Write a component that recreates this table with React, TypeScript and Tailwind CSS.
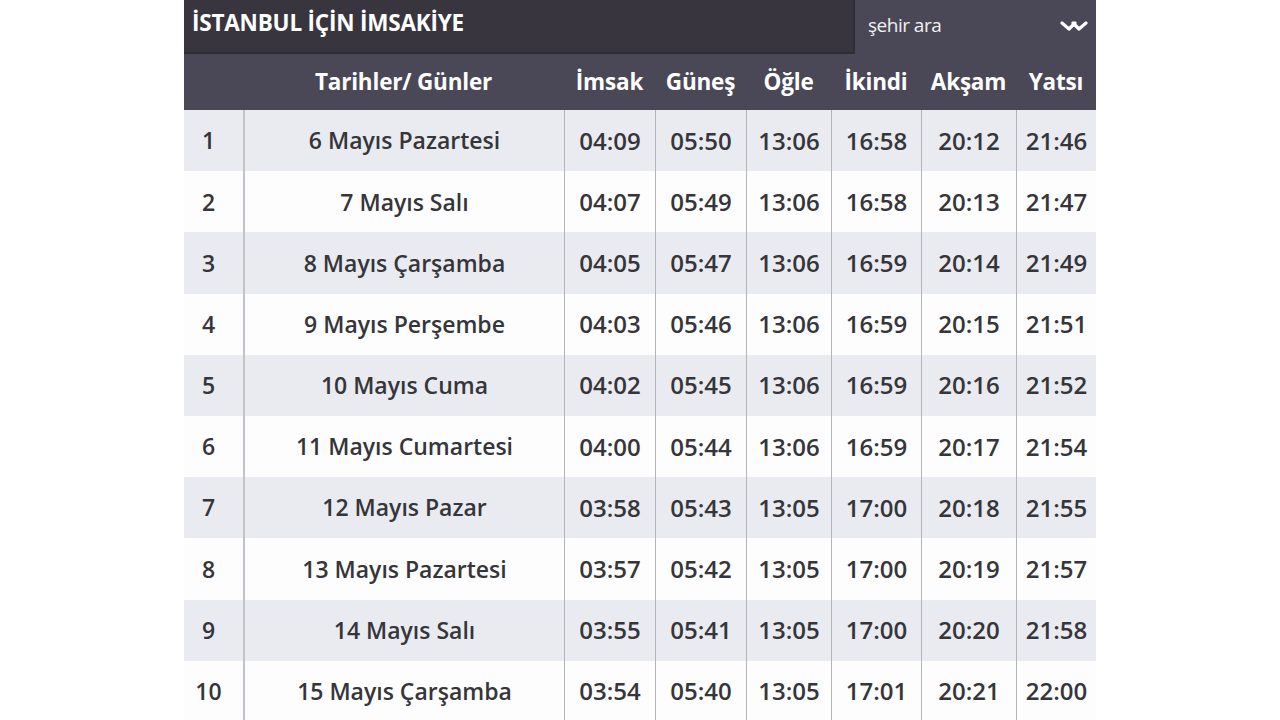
import React from 'react';

type Row = { no: number; date: string; times: string[] };

const rows: Row[] = [
  { no: 1, date: '6 Mayıs Pazartesi', times: ['04:09', '05:50', '13:06', '16:58', '20:12', '21:46'] },
  { no: 2, date: '7 Mayıs Salı', times: ['04:07', '05:49', '13:06', '16:58', '20:13', '21:47'] },
  { no: 3, date: '8 Mayıs Çarşamba', times: ['04:05', '05:47', '13:06', '16:59', '20:14', '21:49'] },
  { no: 4, date: '9 Mayıs Perşembe', times: ['04:03', '05:46', '13:06', '16:59', '20:15', '21:51'] },
  { no: 5, date: '10 Mayıs Cuma', times: ['04:02', '05:45', '13:06', '16:59', '20:16', '21:52'] },
  { no: 6, date: '11 Mayıs Cumartesi', times: ['04:00', '05:44', '13:06', '16:59', '20:17', '21:54'] },
  { no: 7, date: '12 Mayıs Pazar', times: ['03:58', '05:43', '13:05', '17:00', '20:18', '21:55'] },
  { no: 8, date: '13 Mayıs Pazartesi', times: ['03:57', '05:42', '13:05', '17:00', '20:19', '21:57'] },
  { no: 9, date: '14 Mayıs Salı', times: ['03:55', '05:41', '13:05', '17:00', '20:20', '21:58'] },
  { no: 10, date: '15 Mayıs Çarşamba', times: ['03:54', '05:40', '13:05', '17:01', '20:21', '22:00'] },
];

const headers = ['İmsak', 'Güneş', 'Öğle', 'İkindi', 'Akşam', 'Yatsı'];

const cols = 'grid grid-cols-[59px_321px_91px_91px_85px_90px_95px_80px]';

const App: React.FC = () => {
  return (
    <div className="min-h-screen bg-white font-['Open_Sans',sans-serif]">
      <div className="mx-auto w-[912px]">
        {/* title bar */}
        <div className="flex h-[54px]">
          <div className="flex w-[671px] items-center border-b-2 border-r-2 border-[#2f2d35] bg-[#38353f] pb-[6px] pl-[8px]">
            <span className="text-[22.5px] font-bold tracking-[-0.2px] text-white">İSTANBUL İÇİN İMSAKİYE</span>
          </div>
          <div className="flex flex-1 items-center justify-between bg-[#4a4756] pl-[13px] pr-[8px]">
            <span className="pb-[4px] text-[19px] tracking-[-0.5px] text-[#f2f2f2]">şehir ara</span>
            <svg width="28" height="16" viewBox="0 0 28 16" className="mb-[3px]">
              <path d="M2 5 L9 11 L15 5 M13 5 L19 11 L26 5" fill="none" stroke="#fff" strokeWidth="3.2" strokeLinecap="round" strokeLinejoin="round" />
            </svg>
          </div>
        </div>

        {/* column headers */}
        <div className={`${cols} h-[56px] items-center bg-[#4a4756] text-[22.5px] font-bold tracking-[-0.2px] text-white`}>
          <div />
          <div className="text-center">Tarihler/ Günler</div>
          {headers.map((h) => (
            <div key={h} className="text-center">{h}</div>
          ))}
        </div>

        {/* rows */}
        {rows.map((r, i) => (
          <div
            key={r.no}
            className={`${cols} h-[61.2px] font-semibold text-[#35353a] ${i % 2 === 0 ? 'bg-[#e9ebf0]' : 'bg-[#fdfdfe]'}`}
          >
            <div className="flex items-center justify-center pr-[10px] text-[23px]">{r.no}</div>
            <div className="flex items-center justify-center border-l-2 border-[#c2c3c8] text-[23px]">{r.date}</div>
            {r.times.map((t, j) => (
              <div key={j} className="flex items-center justify-center border-l border-[#b4b5ba] text-[24px]">
                {t}
              </div>
            ))}
          </div>
        ))}
      </div>
    </div>
  );
};

export default App;
